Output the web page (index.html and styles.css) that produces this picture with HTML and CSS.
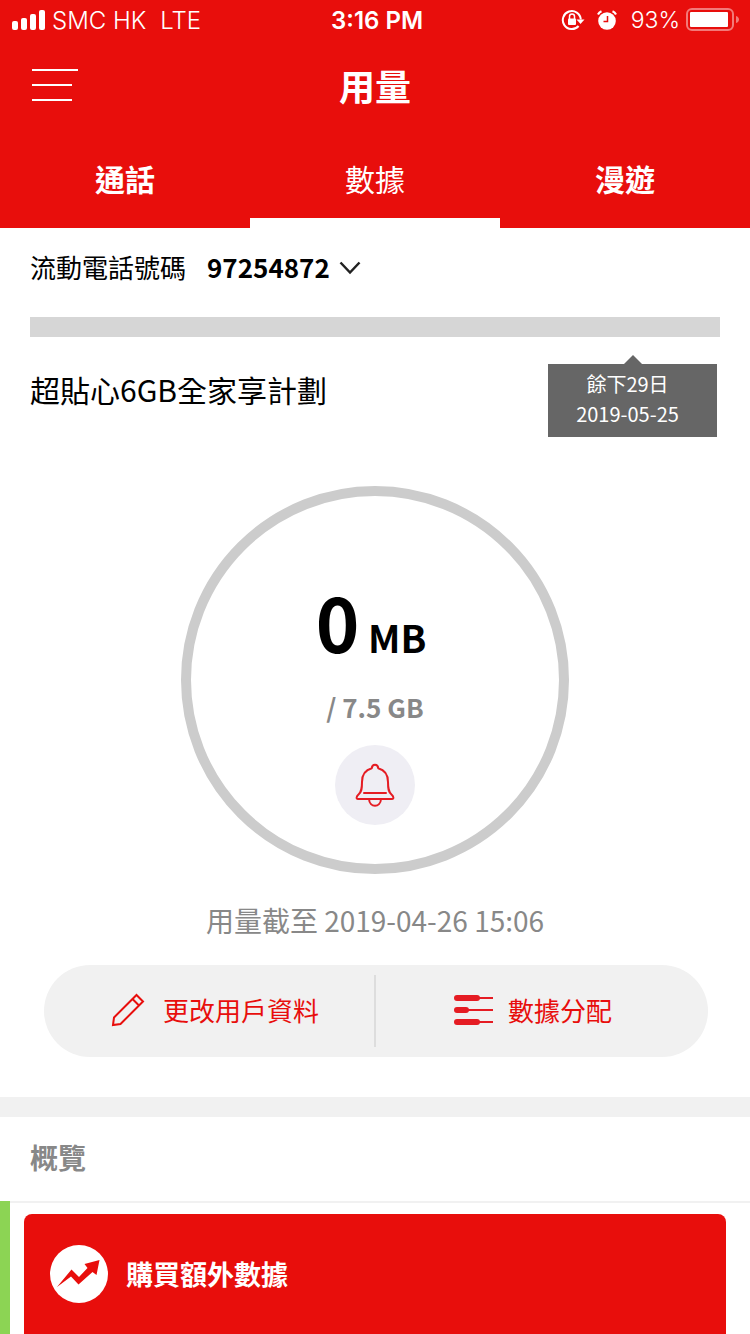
FILE: index.html
```html
<!DOCTYPE html>
<html lang="zh-Hant-HK">
<head>
<meta charset="utf-8">
<meta name="viewport" content="width=device-width, initial-scale=1">
<title>用量</title>
<link rel="stylesheet" href="styles.css">
</head>
<body>
<header class="header">
  <div class="status">
    <div class="status-left">
      <svg class="signal" width="34" height="20" viewBox="0 0 34 20" fill="#fff" aria-hidden="true">
        <rect x="0" y="11" width="6" height="9" rx="2"/><rect x="9" y="8" width="6" height="12" rx="2"/><rect x="18" y="4" width="6" height="16" rx="2"/><rect x="27" y="0" width="6" height="20" rx="2"/>
      </svg>
      <span>SMC HK</span>
      <span class="network">LTE</span>
    </div>
    <div class="clock">3:16 PM</div>
    <div class="status-right">
      <svg width="24" height="22" viewBox="0 0 24 22" aria-hidden="true">
        <path d="M17.600 17A9 9 0 1 1 19.800 10.500" fill="none" stroke="#fff" stroke-width="2"/>
        <path d="M15.500 10.500H23.500L19.500 15z" fill="#fff"/>
        <rect x="7" y="9.500" width="8" height="6.500" rx="1" fill="#fff"/>
        <path d="M8.500 10V7.500a2.500 2.500 0 0 1 5 0V10" fill="none" stroke="#fff" stroke-width="1.500"/>
      </svg>
      <svg class="alarm" width="20" height="20" viewBox="0 0 20 20" aria-hidden="true">
        <circle cx="10" cy="11" r="8.800" fill="#fff"/>
        <path d="M1 4.500A7 7 0 0 1 4.500 1.200M19 4.500A7 7 0 0 0 15.500 1.200" fill="none" stroke="#fff" stroke-width="2.200"/>
        <path d="M10.500 6v5.500H6.500" fill="none" stroke="#e80e0c" stroke-width="1.500"/>
      </svg>
      <span>93%</span>
      <svg class="battery" width="54" height="24" viewBox="0 0 54 24" aria-hidden="true">
        <rect x="1" y="1" width="46" height="21" rx="5" fill="none" stroke="#fff" stroke-opacity=".45" stroke-width="2"/>
        <rect x="4" y="4" width="38" height="15" rx="1" fill="#fff"/>
        <path d="M50 8c4 1 4 6 0 7z" fill="#fff" fill-opacity=".45"/>
      </svg>
    </div>
  </div>
  <div class="titlebar">
    <button class="menu" type="button" aria-label="選單">
      <svg width="46" height="32" viewBox="0 0 46 32" fill="#fff" aria-hidden="true"><path d="M0 0h46v2H0zM0 15h40v2H0zM0 30h40v2H0z"/></svg>
    </button>
    <h1 class="title">用量</h1>
  </div>
  <nav class="tabs">
    <button class="tab" type="button">通話</button>
    <button class="tab tab-active" type="button" aria-current="page">數據</button>
    <button class="tab" type="button">漫遊</button>
  </nav>
</header>
<main class="main">
  <section class="usage">
    <div class="phone">
      <label class="phone-label" for="number">流動電話號碼</label>
      <div class="picker">
        <select id="number" class="number"><option>97254872</option></select>
        <svg class="chevron" width="22" height="14" viewBox="0 0 22 14" fill="none" stroke="#222" stroke-width="2.500" aria-hidden="true"><path d="M1.500 1.500L11 11.500L20.500 1.500"/></svg>
      </div>
    </div>
    <div class="period" role="progressbar" aria-label="計劃週期"></div>
    <div class="plan">
      <h2 class="plan-name">超貼心6GB全家享計劃</h2>
      <div class="remaining">
        <svg class="pointer" width="18" height="9" viewBox="0 0 18 9" aria-hidden="true"><path d="M0 9L9 0L18 9z" fill="#666"/></svg>
        <div class="remaining-box">餘下29日<br>2019-05-25</div>
      </div>
    </div>
    <div class="gauge">
      <div class="used"><span class="used-value">0</span> MB</div>
      <div class="quota">/ 7.5 GB</div>
      <button class="bell" type="button" aria-label="通知">
        <svg width="40" height="44" viewBox="0 0 40 44" fill="none" stroke="#e51c23" stroke-width="2" stroke-linejoin="round" stroke-linecap="round" aria-hidden="true">
          <path d="M16.800 5.300C17 0.500 23 0.500 23.200 5.300C29.500 7 33 11 33 19C33 26 33.500 29 36.500 31.500C38.800 33.500 39 36 37 36H3C1 36 1.200 33.500 3.500 31.500C6.500 29 7 26 7 19C7 11 10.500 7 16.800 5.300Z"/>
          <path d="M9 30H31M14 36C14.500 45 25.500 45 26 36"/>
        </svg>
      </button>
    </div>
    <p class="updated">用量截至 2019-04-26 15:06</p>
    <div class="actions">
      <button class="action action-edit" type="button">
        <svg width="34" height="34" viewBox="0 0 34 34" fill="none" stroke="#e80e0c" stroke-width="2" aria-hidden="true"><path d="M2 32L3 24.500L25.500 2L32 8.500L9.500 31zM21.500 6L28 12.500"/></svg>
        更改用戶資料
      </button>
      <button class="action action-share" type="button">
        <svg width="40" height="30" viewBox="0 0 40 30" fill="#e51c23" aria-hidden="true"><rect width="26" height="6" rx="3"/><rect y="12" width="15" height="6" rx="3"/><rect y="24" width="26" height="6" rx="3"/><path d="M24 2h15v2H24zM13 14h26v2H13zM24 26h15v2H24z"/></svg>
        數據分配
      </button>
    </div>
  </section>
  <section class="overview">
    <h2 class="overview-title">概覽</h2>
    <div class="overview-body">
      <button class="buy" type="button">
        <svg width="58" height="58" viewBox="0 0 58 58" aria-hidden="true"><circle cx="29" cy="29" r="29" fill="#fff"/><path d="M7 42L21.500 24.500L29 32L37.500 23L34.500 19L49.500 15L46.500 30L42.500 27L28.500 39.500L21 31.500z" fill="#e80e0c"/></svg>
        <span>購買額外數據</span>
      </button>
    </div>
  </section>
</main>
</body>
</html>
```
FILE: styles.css
```css
* { box-sizing: border-box; }

body {
  margin: 0;
  min-height: 100vh;
  display: flex;
  flex-direction: column;
  background: #fff;
  color: #000;
  font-family: "Noto Sans CJK TC", sans-serif;
}

h1, h2, p { margin: 0; }
svg { display: block; flex: none; }

button, select {
  margin: 0;
  padding: 0;
  border: 0;
  background: none;
  color: inherit;
  font: inherit;
}

.header { background: #e80e0c; color: #fff; }

.status {
  display: grid;
  grid-template-columns: 1fr auto 1fr;
  align-items: center;
  height: 40px;
  padding: 0 12px;
  font-family: Inter, sans-serif;
  font-size: 24px;
  font-weight: 300;
}
.status-left, .status-right { display: flex; align-items: center; }
.status-right { justify-content: flex-end; font-size: 23px; }
.signal { margin-right: 6px; }
.network { margin-left: 14px; }
.clock { font-weight: 600; padding-left: 4px; }
.alarm { margin: 0 14px 0 12px; }
.battery { margin: 0 -2px 0 6px; }

.titlebar {
  display: grid;
  grid-template-columns: 1fr auto 1fr;
  align-items: center;
  height: 90px;
  padding: 0 32px;
}
.menu { justify-self: start; }
.title { font-size: 36px; line-height: 52px; font-weight: 700; }

.tabs { display: grid; grid-template-columns: repeat(3, 1fr); }
.tab {
  height: 98px;
  padding-top: 8px;
  border-bottom: 10px solid transparent;
  font-size: 30px;
  line-height: 44px;
  font-weight: 700;
}
.tab-active { font-weight: 400; border-bottom-color: #fff; }

.main { flex: 1; display: flex; flex-direction: column; }
.usage { padding: 0 30px 40px; }

.phone { display: flex; align-items: center; height: 80px; font-size: 26px; gap: 21px; }
.phone-label { padding-bottom: 3px; }
.picker { display: grid; align-items: center; }
.number {
  grid-area: 1 / 1;
  appearance: none;
  padding: 0 31px 3px 0;
  font-weight: 700;
}
.chevron { grid-area: 1 / 1; justify-self: end; pointer-events: none; }

.period { height: 20px; margin-top: 9px; background: #d6d6d6; }

.plan {
  display: flex;
  justify-content: space-between;
  align-items: flex-start;
  padding-top: 18px;
}
.plan-name { font-size: 30px; line-height: 44px; font-weight: 400; margin-top: 12px; }
.remaining { width: 169px; margin-right: 3px; }
.pointer { margin: 0 auto; }
.remaining-box {
  padding: 5px 10px 8px 0;
  background: #666;
  color: #fff;
  font-size: 20px;
  line-height: 30px;
  text-align: center;
}

.gauge {
  display: flex;
  flex-direction: column;
  align-items: center;
  width: 388px;
  height: 388px;
  margin: 49px auto 0;
  padding-top: 75px;
  border: 10px solid #ccc;
  border-radius: 50%;
}
.used { font-size: 38px; line-height: 100px; font-weight: 700; margin-right: 8px; }
.used-value { font-size: 74px; }
.quota { color: #888; font-size: 26px; line-height: 40px; font-weight: 700; }
.bell {
  display: grid;
  place-items: center;
  width: 80px;
  height: 80px;
  margin-top: 18px;
  border-radius: 50%;
  background: #efeef4;
}

.updated { margin-top: 26px; color: #888; font-size: 28px; line-height: 40px; text-align: center; }

.actions {
  display: grid;
  grid-template-columns: 1fr 1fr;
  margin: 25px 12px 0 14px;
  padding: 10px 0;
  border-radius: 46px;
  background: #f1f1f1;
}
.action {
  display: flex;
  align-items: center;
  justify-content: center;
  height: 72px;
  padding-bottom: 3px;
  color: #e80e0c;
  font-size: 26px;
}
.action-edit { gap: 18px; padding-left: 12px; border-right: 2px solid #ddd; }
.action-share { gap: 14px; padding-right: 18px; }

.overview {
  flex: 1;
  display: flex;
  flex-direction: column;
  border-top: 20px solid #f1f1f1;
}
.overview-title {
  padding: 19px 30px 23px;
  color: #888;
  font-size: 28px;
  line-height: 42px;
  font-weight: 700;
}
.overview-body {
  flex: 1;
  display: flex;
  padding: 13px 24px 0 14px;
  background: linear-gradient(#f1f1f1, #f1f1f1) top / 100% 2px no-repeat;
  border-left: 10px solid #8cd454;
}
.buy {
  flex: 1;
  display: flex;
  align-items: center;
  gap: 18px;
  padding: 31px 26px;
  border-radius: 8px 8px 0 0;
  background: #e80e0c;
  color: #fff;
  font-size: 27px;
  line-height: 40px;
  font-weight: 700;
}
```
